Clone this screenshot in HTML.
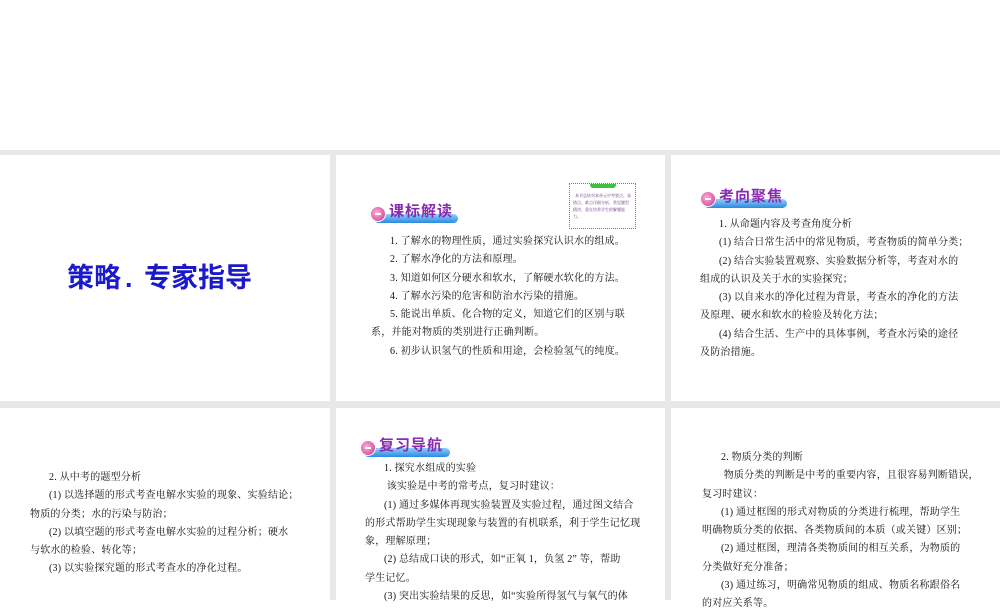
<!DOCTYPE html>
<html><head><meta charset="utf-8"><style>
*{margin:0;padding:0;box-sizing:border-box}
body{width:1000px;height:600px;background:#fff;position:relative;overflow:hidden;font-family:"Liberation Serif","Noto Serif CJK SC",serif;}
.band{position:absolute;left:0;top:150px;width:1000px;height:450px;background:#e8e8e8}
.p{position:absolute;background:#fff}
.t{position:absolute;font-size:10px;line-height:18.3px;color:#111;white-space:nowrap;letter-spacing:0.2px}
.t div{height:18.3px}
.ind{padding-left:19px}
.badge{position:absolute;height:20px}
.badge .bar{position:absolute;left:4px;right:0;bottom:0;height:9px;background:linear-gradient(#8fd0fa,#2a8ae0);border-radius:5px}
.badge .c{position:absolute;left:0;top:3px;width:16px;height:16px;border-radius:50%;background:radial-gradient(circle at 40% 40%,#f8b0d8,#d0308a);border:1px solid #fff}
.badge .c:after{content:"";position:absolute;left:4px;top:6px;width:6px;height:2px;background:#fff}
.badge .l{position:absolute;left:19px;top:-3px;font:bold 15px "Noto Sans CJK SC",sans-serif;color:#8a2ab0;letter-spacing:1px}
</style></head><body>
<div class="band"></div>
<div class="p" style="left:0;top:155px;width:330px;height:246px"></div>
<div class="p" style="left:336px;top:155px;width:329px;height:246px"></div>
<div class="p" style="left:671px;top:155px;width:329px;height:246px"></div>
<div class="p" style="left:0;top:408px;width:330px;height:192px"></div>
<div class="p" style="left:336px;top:408px;width:329px;height:192px"></div>
<div class="p" style="left:671px;top:408px;width:329px;height:192px"></div>

<div style="position:absolute;left:67px;top:256px;font:bold 27px 'Liberation Sans','Noto Sans CJK SC',sans-serif;color:#1a1acc;white-space:nowrap">策略<span style="margin:0 4px">.</span> 专家指导</div>

<div class="badge" style="left:370px;top:203px;width:88px"><div class="bar"></div><div class="c"></div><div class="l">课标解读</div></div>
<div style="position:absolute;left:569px;top:183px;width:67px;height:46px;border:1px dotted #d040a0;font-size:4px;line-height:7px;color:#603080;padding:8px 3px 0;overflow:hidden">
<div style="position:absolute;left:20px;top:-2px;width:26px;height:6px;background:#40c040;border-radius:3px"></div>
&nbsp;&nbsp;本节总结对本单元中考要点、易错点、难点详细分析，常见题型精讲，重在培养学生的解题能力。</div>
<div class="t" style="left:371px;top:233px">
<div class="ind">1. 了解水的物理性质，通过实验探究认识水的组成。</div>
<div class="ind">2. 了解水净化的方法和原理。</div>
<div class="ind">3. 知道如何区分硬水和软水，了解硬水软化的方法。</div>
<div class="ind">4. 了解水污染的危害和防治水污染的措施。</div>
<div class="ind">5. 能说出单质、化合物的定义，知道它们的区别与联</div>
<div>系，并能对物质的类别进行正确判断。</div>
<div class="ind">6. 初步认识氢气的性质和用途，会检验氢气的纯度。</div>
</div>

<div class="badge" style="left:700px;top:188px;width:87px"><div class="bar"></div><div class="c"></div><div class="l">考向聚焦</div></div>
<div class="t" style="left:700px;top:216px">
<div class="ind">1. 从命题内容及考查角度分析</div>
<div class="ind">(1) 结合日常生活中的常见物质，考查物质的简单分类；</div>
<div class="ind">(2) 结合实验装置观察、实验数据分析等，考查对水的</div>
<div>组成的认识及关于水的实验探究；</div>
<div class="ind">(3) 以自来水的净化过程为背景，考查水的净化的方法</div>
<div>及原理、硬水和软水的检验及转化方法；</div>
<div class="ind">(4) 结合生活、生产中的具体事例，考查水污染的途径</div>
<div>及防治措施。</div>
</div>

<div class="t" style="left:30px;top:469px">
<div class="ind">2. 从中考的题型分析</div>
<div class="ind">(1) 以选择题的形式考查电解水实验的现象、实验结论；</div>
<div>物质的分类；水的污染与防治；</div>
<div class="ind">(2) 以填空题的形式考查电解水实验的过程分析；硬水</div>
<div>与软水的检验、转化等；</div>
<div class="ind">(3) 以实验探究题的形式考查水的净化过程。</div>
</div>

<div class="badge" style="left:360px;top:437px;width:90px"><div class="bar"></div><div class="c"></div><div class="l">复习导航</div></div>
<div class="t" style="left:365px;top:460px">
<div class="ind">1. 探究水组成的实验</div>
<div class="ind">&nbsp;该实验是中考的常考点，复习时建议：</div>
<div class="ind">(1) 通过多媒体再现实验装置及实验过程，通过图文结合</div>
<div>的形式帮助学生实现现象与装置的有机联系，利于学生记忆现</div>
<div>象，理解原理；</div>
<div class="ind">(2) 总结成口诀的形式，如“正氧 1，负氢 2” 等，帮助</div>
<div>学生记忆。</div>
<div class="ind">(3) 突出实验结果的反思，如“实验所得氢气与氧气的体</div>
</div>

<div class="t" style="left:702px;top:449px">
<div class="ind">2. 物质分类的判断</div>
<div class="ind">&nbsp;物质分类的判断是中考的重要内容，且很容易判断错误，</div>
<div>复习时建议：</div>
<div class="ind">(1) 通过框图的形式对物质的分类进行梳理，帮助学生</div>
<div>明确物质分类的依据、各类物质间的本质（或关键）区别；</div>
<div class="ind">(2) 通过框图，理清各类物质间的相互关系，为物质的</div>
<div>分类做好充分准备；</div>
<div class="ind">(3) 通过练习，明确常见物质的组成、物质名称跟俗名</div>
<div>的对应关系等。</div>
</div>
</body></html>
